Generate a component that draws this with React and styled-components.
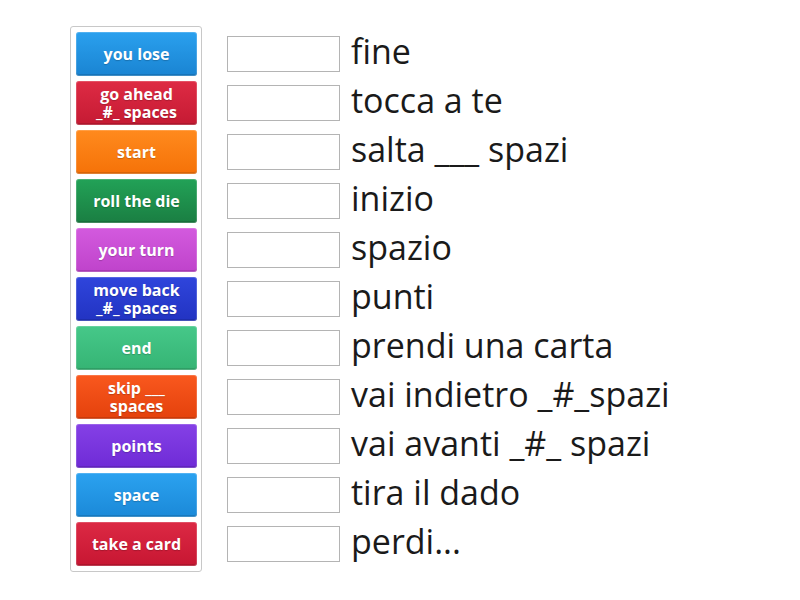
import React from "react";
import styled, { createGlobalStyle } from "styled-components";

const GlobalStyle = createGlobalStyle`
  html, body {
    margin: 0;
    padding: 0;
    background: #fff;
    font-family: "Open Sans", "Liberation Sans", sans-serif;
  }
`;

const Page = styled.div`
  display: flex;
  align-items: flex-start;
  gap: 25px;
  padding: 26px 0 0 70px;
`;

const Bank = styled.div`
  display: flex;
  flex-direction: column;
  gap: 5px;
  padding: 5px 4px 5px 5px;
  border: 1px solid #c8c8c8;
  border-radius: 3px;
`;

const Tile = styled.div`
  width: 121px;
  height: 44px;
  box-sizing: border-box;
  display: flex;
  align-items: center;
  justify-content: center;
  text-align: center;
  border-radius: 3px;
  color: #fff;
  font-size: 16px;
  font-weight: 700;
  line-height: 18px;
  white-space: nowrap;
  text-shadow: 0 1px 1px rgba(0, 0, 0, 0.2);
  background: linear-gradient(to bottom, ${(p) => p.$top}, ${(p) => p.$bottom});
  box-shadow: inset 0 0 0 1px rgba(255, 255, 255, 0.18),
    inset 0 -2px 0 rgba(0, 0, 0, 0.12);
`;

const Rows = styled.div`
  display: flex;
  flex-direction: column;
  gap: 5px;
  padding-top: 6px;
`;

const Row = styled.div`
  display: flex;
  align-items: center;
  height: 44px;
`;

const Slot = styled.div`
  width: 113px;
  height: 36px;
  box-sizing: border-box;
  border: 1px solid #b4b4b4;
  background: #fff;
  margin-right: 11px;
`;

const Label = styled.span`
  font-size: 34px;
  color: #1a1a1a;
  white-space: nowrap;
  line-height: 1;
  margin-top: -7px;
`;

const tiles = [
  { lines: ["you lose"], top: "#2aa0ee", bottom: "#1a84d2" },
  { lines: ["go ahead", "_#_ spaces"], top: "#de2b44", bottom: "#c51a33" },
  { lines: ["start"], top: "#ff8a1e", bottom: "#f57208" },
  { lines: ["roll the die"], top: "#22a257", bottom: "#1a7e42" },
  { lines: ["your turn"], top: "#d35ade", bottom: "#bf43cb" },
  { lines: ["move back", "_#_ spaces"], top: "#2f45dc", bottom: "#2233c2" },
  { lines: ["end"], top: "#46c889", bottom: "#35b474" },
  { lines: ["skip ___", "spaces"], top: "#f9581e", bottom: "#e4410c" },
  { lines: ["points"], top: "#8540e6", bottom: "#6f2bd6" },
  { lines: ["space"], top: "#2ba2f0", bottom: "#1b89d8" },
  { lines: ["take a card"], top: "#dc2944", bottom: "#c71632" },
];

const labels = [
  "fine",
  "tocca a te",
  "salta ___ spazi",
  "inizio",
  "spazio",
  "punti",
  "prendi una carta",
  "vai indietro _#_spazi",
  "vai avanti _#_ spazi",
  "tira il dado",
  "perdi...",
];

export default function App() {
  return (
    <>
      <GlobalStyle />
      <Page>
        <Bank>
          {tiles.map((t) => (
            <Tile key={t.lines.join(" ")} $top={t.top} $bottom={t.bottom}>
              <span>
                {t.lines.map((line, i) => (
                  <React.Fragment key={line}>
                    {i > 0 && <br />}
                    {line}
                  </React.Fragment>
                ))}
              </span>
            </Tile>
          ))}
        </Bank>
        <Rows>
          {labels.map((l) => (
            <Row key={l}>
              <Slot />
              <Label>{l}</Label>
            </Row>
          ))}
        </Rows>
      </Page>
    </>
  );
}
